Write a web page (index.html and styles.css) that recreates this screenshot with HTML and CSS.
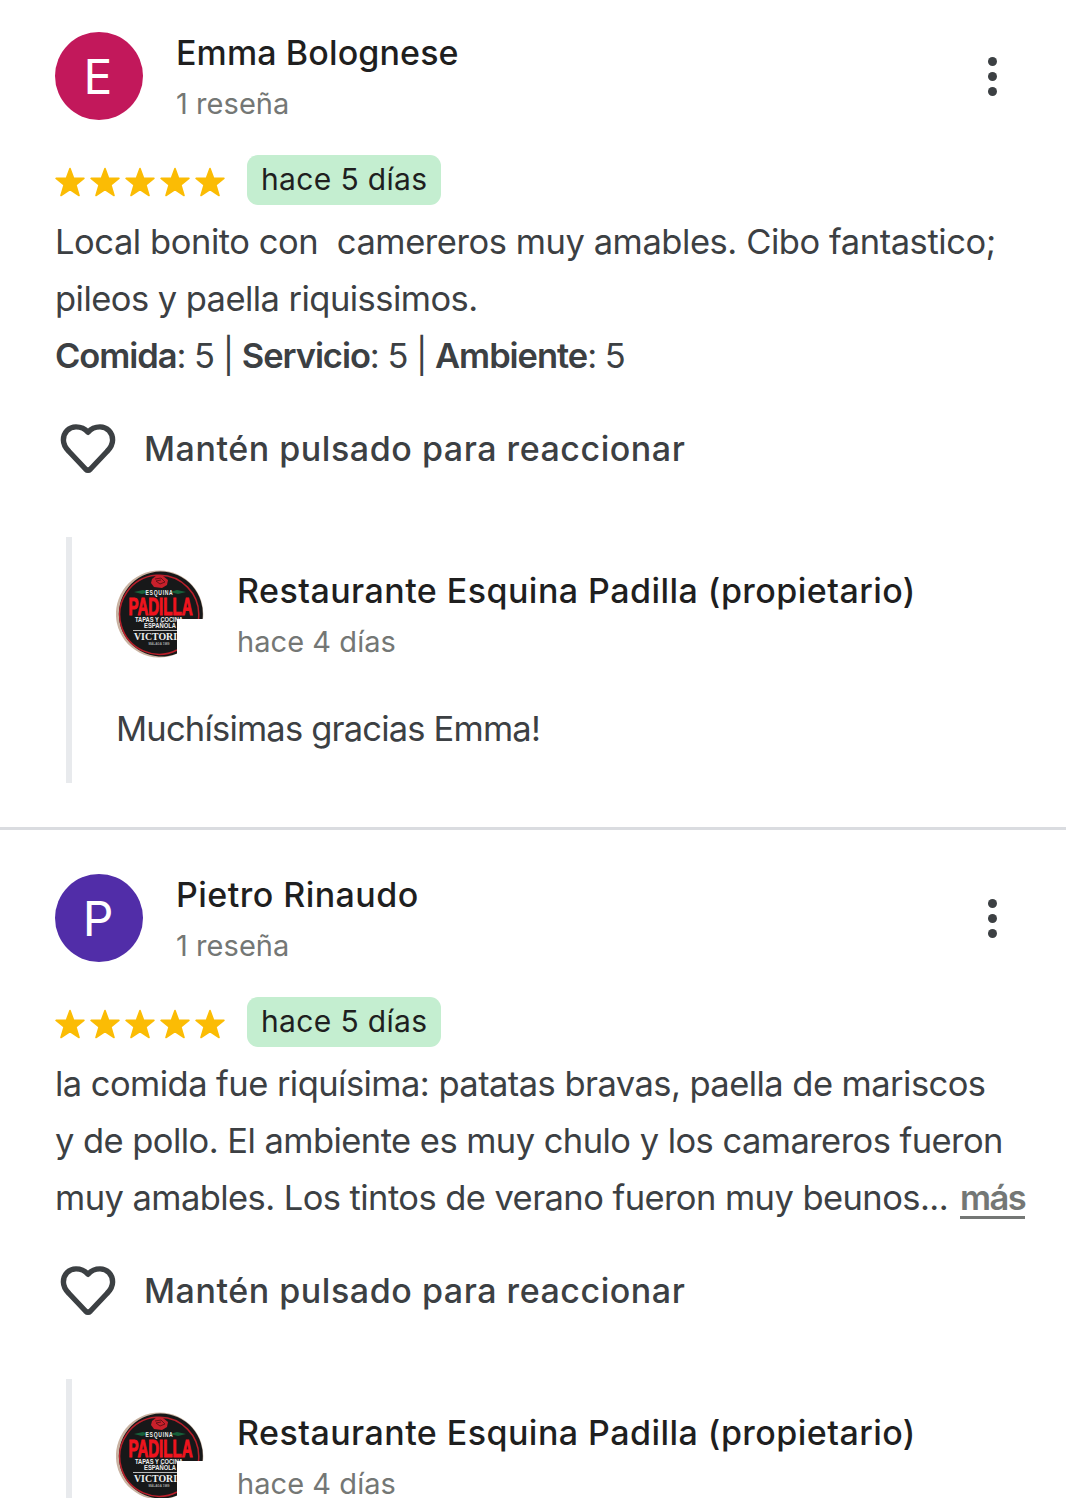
FILE: index.html
```html
<!DOCTYPE html>
<html lang="es">
<head>
<meta charset="utf-8">
<title>Reseñas</title>
<link rel="stylesheet" href="styles.css">
</head>
<body>
<svg width="0" height="0" class="defs" aria-hidden="true">
  <symbol id="star" viewBox="0 0 30 30"><path d="M15 1.500 18.500 11 28.900 11.400 20.900 18 24 28.500 15 22.700 6 28.500 9.100 18 1.100 11.400 11.500 11Z" stroke="#fbbc04" stroke-width="1.600" stroke-linejoin="round"/></symbol>
  <symbol id="heart" viewBox="0 0 56 50"><path d="M28 8.300C23.500 3.100 18.500 2.900 16 2.900C8.800 2.900 3.400 8.500 3.400 16C3.400 20.500 5 23.500 9 27.500L25.500 45Q28 47.500 30.500 45L47 27.500C51 23.500 52.600 20.500 52.600 16C52.600 8.500 47.200 2.900 40 2.900C37.500 2.900 32.500 3.100 28 8.300Z" fill="none" stroke="#3c4043" stroke-width="5.400" stroke-linejoin="round"/></symbol>
  <symbol id="logo" viewBox="0 0 88 88">
    <path d="M43.500 .5A43.500 43.500 0 0 1 87 49H61V83.800A43.500 43.500 0 1 1 43.500 .5Z" fill="#c9b3a2"/>
    <path d="M44.500 1.500A42.500 42.500 0 0 1 86.500 49H61V83.500A42.500 42.500 0 1 1 44.500 1.500Z" fill="#171819"/>
    <path d="M82.500 49A39.500 39.500 0 1 0 61 80" fill="none" stroke="#b91f2a" stroke-width="1.500"/>
    <path d="M18 22l9-2 7 2-8 2zM70 22l-9-2-7 2 8 2z" fill="#17603a"/>
    <path d="M36 9l5-4 6 1 5 4-1 5-5 3-8-1-3-4z" fill="#c8202b"/>
    <path d="M39 9l6-1 4 4-5 2-4-3 5-1" fill="none" stroke="#671218" stroke-width="1"/>
    <g text-anchor="middle" fill="#eee" font-family="Liberation Sans, sans-serif" font-weight="700">
      <text transform="translate(43.500 25) scale(.68 1)" font-size="7.500" letter-spacing="1">ESQUINA</text>
      <text x="44.500" y="44.700" font-size="24.500" fill="#f0141e" stroke="#f0141e" stroke-width="1" textLength="64" lengthAdjust="spacingAndGlyphs">PADILLA</text>
      <text x="43" y="52" font-size="6.300" textLength="48" lengthAdjust="spacingAndGlyphs">TAPAS Y COCINA</text>
      <text x="44" y="57.500" font-size="6.300" textLength="32" lengthAdjust="spacingAndGlyphs">ESPAÑOLA</text>
      <text x="39.500" y="70" font-size="9.500" font-family="Liberation Serif, serif" textLength="43" lengthAdjust="spacingAndGlyphs">VICTORI</text>
      <text x="43" y="75" font-size="3" fill="#aaa" textLength="21">MÁLAGA 1989</text>
    </g>
    <path d="M17 60.500H61" stroke="#bbb" stroke-width="1"/>
    <path d="M61 49H88V88H61Z" fill="#fff"/>
  </symbol>
</svg>
<main class="reviews">
  <article class="review">
    <header class="head">
      <div class="avatar pink"><span>E</span></div>
      <div class="who"><div class="name"><span class="n-emma">Emma Bolognese</span></div><div class="meta"><span>1 reseña</span></div></div>
      <div class="more"><i></i><i></i><i></i></div>
    </header>
    <div class="rating">
      <div class="stars"><svg><use href="#star"/></svg><svg><use href="#star"/></svg><svg><use href="#star"/></svg><svg><use href="#star"/></svg><svg><use href="#star"/></svg></div>
      <div class="pill">hace 5 días</div>
    </div>
    <div class="body">
      <div class="l1">Local bonito con&nbsp; camereros muy amables. Cibo fantastico;</div>
      <div class="l2">pileos y paella riquissimos.</div>
      <div class="scores"><b>Comida</b>: 5 | <b>Servicio</b>: 5 | <b>Ambiente</b>: 5</div>
    </div>
    <div class="react"><svg><use href="#heart"/></svg><span>Mantén pulsado para reaccionar</span></div>
    <section class="reply">
      <div class="owner">
        <svg class="logo"><use href="#logo"/></svg>
        <div class="who"><div class="name">Restaurante Esquina Padilla (propietario)</div><div class="meta">hace 4 días</div></div>
      </div>
      <div class="answer">Muchísimas gracias Emma!</div>
    </section>
  </article>
  <article class="review">
    <header class="head">
      <div class="avatar purple"><span>P</span></div>
      <div class="who"><div class="name">Pietro Rinaudo</div><div class="meta"><span>1 reseña</span></div></div>
      <div class="more"><i></i><i></i><i></i></div>
    </header>
    <div class="rating">
      <div class="stars"><svg><use href="#star"/></svg><svg><use href="#star"/></svg><svg><use href="#star"/></svg><svg><use href="#star"/></svg><svg><use href="#star"/></svg></div>
      <div class="pill">hace 5 días</div>
    </div>
    <div class="body">
      <div>la comida fue riquísima: patatas bravas, paella de mariscos</div>
      <div>y de pollo. El ambiente es muy chulo y los camareros fueron</div>
      <div class="last"><span>muy amables. Los tintos de verano fueron muy beunos...</span><a class="expand">más</a></div>
    </div>
    <div class="react"><svg><use href="#heart"/></svg><span>Mantén pulsado para reaccionar</span></div>
    <section class="reply">
      <div class="owner">
        <svg class="logo"><use href="#logo"/></svg>
        <div class="who"><div class="name">Restaurante Esquina Padilla (propietario)</div><div class="meta">hace 4 días</div></div>
      </div>
    </section>
  </article>
</main>
</body>
</html>
```
FILE: styles.css
```css
* { box-sizing: border-box; }
html { height: 1498px; overflow: hidden; }
body { margin: 0; background: #fff; color: #3c4043; font-family: Inter, "Liberation Sans", sans-serif; height: 1498px; overflow: hidden; }
.defs { position: absolute; }
.review { padding: 44px 0 44px 55px; border-bottom: 3px solid #dadce0; }
.review:first-child { padding-top: 32px; }
.head { display: flex; align-items: center; height: 88px; }
.avatar { width: 88px; height: 88px; padding-right: 2px; border-radius: 50%; color: #fff; font-size: 48px; line-height: 90px; text-align: center; font-weight: 400; }
.pink { background: #c2185b; }
.purple { background: #512da8; }
.who { flex: 1; padding: 4px 0 0 33px; white-space: nowrap; }
.name { font-size: 34px; line-height: 51px; font-weight: 500; color: #1f1f1f; letter-spacing: .45px; }
.n-emma { letter-spacing: .12px; }
.meta { font-size: 29px; line-height: 51px; color: #747775; letter-spacing: .06px; }
.more { display: grid; gap: 5.5px; margin: 1px 69px 0 0; }
.more i { width: 9.5px; height: 9.5px; border-radius: 50%; background: #3c4043; }
.rating { display: flex; margin-top: 35px; height: 50px; align-items: center; }
.stars { display: flex; gap: 5px; padding-top: 3px; width: 192px; }
.stars svg { width: 30px; height: 30px; fill: #fbbc04; }
.pill { width: 194px; height: 50px; padding-left: 14px; border-radius: 11px; background: #c4eed0; color: #1f1f1f; font-size: 30px; line-height: 49px; letter-spacing: .35px; white-space: nowrap; }
.body { margin-top: 8px; padding-bottom: 1px; font-size: 34.5px; line-height: 57px; letter-spacing: -.55px; white-space: nowrap; }
.l1 { letter-spacing: -.44px; }
.scores { letter-spacing: -1.05px; }
.body b { font-weight: 600; }
.last { display: flex; gap: 12px; letter-spacing: -.567px; }
.expand { height: 50px; line-height: 57px; color: #747775; font-weight: 600; letter-spacing: -1.6px; border-bottom: 3px solid #747775; }
.react { display: flex; align-items: center; height: 50px; margin-top: 39px; padding-left: 5px; font-size: 34px; font-weight: 500; letter-spacing: .54px; white-space: nowrap; }
.react svg { width: 56px; height: 50px; margin-right: 28px; }
.react span { padding-bottom: 2px; }
.reply { margin: 63px 0 0 11px; border-left: 6px solid #e8eaed; padding: 33px 0 26px 44px; }
.owner { display: flex; align-items: center; height: 88px; }
.logo { width: 88px; height: 88px; }
.answer { margin-top: 42px; font-size: 34.5px; line-height: 57px; letter-spacing: -.81px; }
```
